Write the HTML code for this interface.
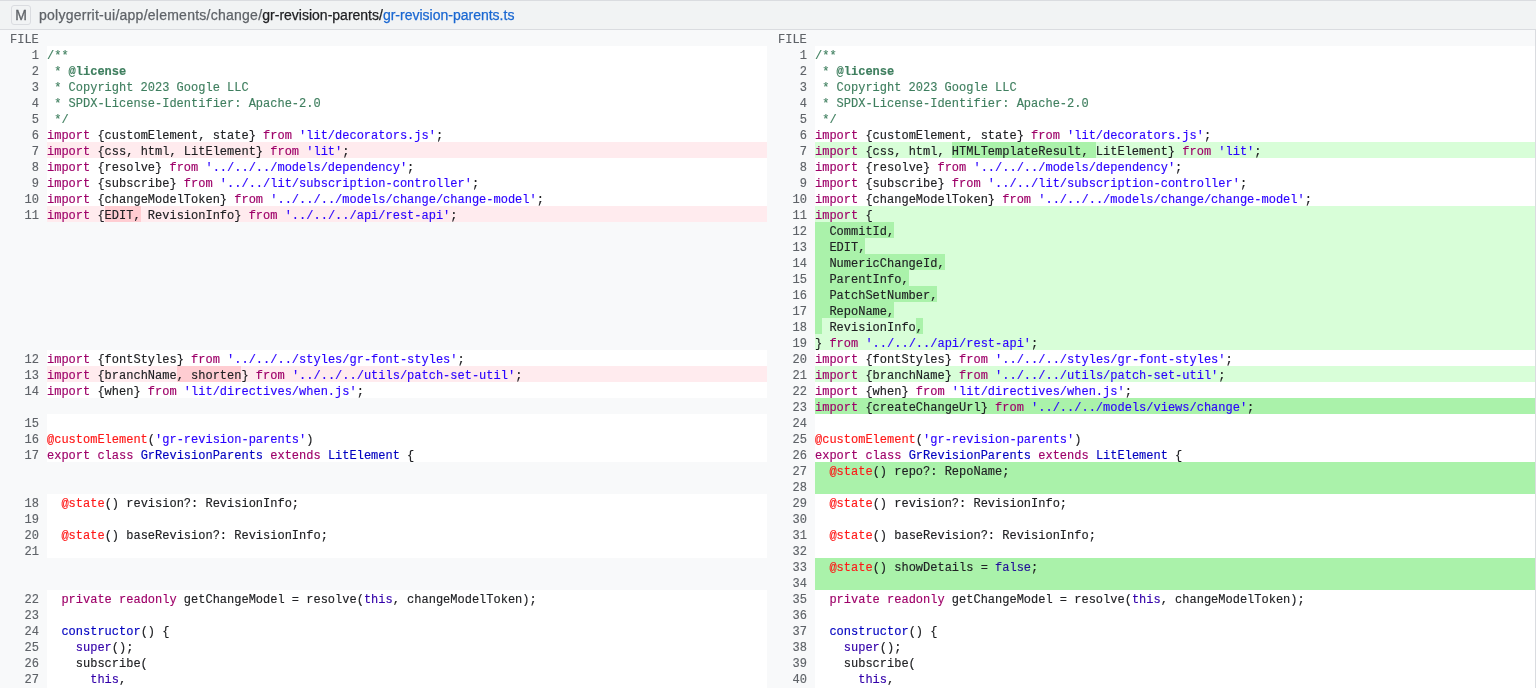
<!DOCTYPE html>
<html><head><meta charset="utf-8">
<style>
html,body{margin:0;padding:0;}
body{-webkit-font-smoothing:antialiased;width:1536px;height:688px;overflow:hidden;position:relative;background:#fff;}
.wrap{position:absolute;left:0;top:0;width:1536px;height:688px;will-change:transform;}
.hdr{position:absolute;left:0;top:0;width:1536px;height:29px;background:#f1f3f4;border-top:1px solid #dadce0;box-sizing:border-box;}
.hdrb{position:absolute;left:0;top:29px;width:1536px;height:1px;background:#dadce0;}
.badge{-webkit-text-stroke:0.3px currentColor;position:absolute;left:11px;top:5px;width:20px;height:20px;box-sizing:border-box;border:1px solid #dadce0;border-radius:3px;background:#f1f3f4;
 font-family:"Liberation Sans",sans-serif;font-size:14px;color:#5f6368;text-align:center;line-height:18px;}
.path{-webkit-text-stroke:0.25px currentColor;position:absolute;left:39px;top:6px;font-family:"Liberation Sans",sans-serif;font-size:14px;line-height:18px;white-space:pre;color:#5f6368;}
.path .g{letter-spacing:0.25px}
.path .d{color:#202124}
.path .f{color:#1967d2}
.rb{position:absolute;left:1535px;top:30px;width:1px;height:658px;background:#dadce0;z-index:5}
.filerow{position:absolute;left:0;top:30px;width:1536px;height:16px;background:#f8f9fa;}
.filerow span{-webkit-text-stroke:0.15px currentColor;position:absolute;top:0;font-family:"Liberation Mono",monospace;font-size:12px;line-height:21px;color:#5f6368;}
.row{position:absolute;left:0;width:1536px;height:16px;}
.row > div{position:absolute;top:0;height:16px;}
.ln{-webkit-text-stroke:0.15px currentColor;background:#f8f9fa;box-sizing:border-box;padding-right:8px;text-align:right;font-family:"Liberation Mono",monospace;font-size:12px;line-height:21px;color:#5f6368;white-space:pre;}
.bk{background:#f8f9fa;}
.ct{-webkit-text-stroke:0.15px currentColor;background:#fff;font-family:"Liberation Mono",monospace;font-size:12px;line-height:21px;color:#202124;white-space:pre;overflow:hidden;}
.ct.rm{background:#ffebee}
.ct.ad{background:#d8fed8}
.ct.add{background:#aaf2aa}
.ct i{position:absolute;top:0;height:16px;}
.hr{background:#ffcdd2}
.ha{background:#aaf2aa}
.tx{position:relative;}
.c{color:#3f7f5f}
.c b{font-weight:bold}
.k{color:#9e0069}
.s{color:#2a00ff}
.m{color:#ff1717}
.t{color:#0000c0}
.b{color:#30a}
.l{color:#219}
</style></head><body>
<div class="wrap">
<div class="hdr"></div>
<div class="hdrb"></div>
<div class="badge">M</div>
<div class="path"><span class="g">polygerrit-ui/app/elements/change/</span><span class="d">gr-revision-parents/</span><span class="f">gr-revision-parents.ts</span></div>
<div class="filerow"><span style="left:10px">FILE</span><span style="left:778px">FILE</span></div>
<div class="row" style="top:46px"><div class="ln" style="left:0;width:47px">1</div><div class="ct" style="left:47px;width:720px"><span class="tx"><span class="c">/**</span></span></div><div class="ln" style="left:767px;width:48px">1</div><div class="ct" style="left:815px;width:721px"><span class="tx"><span class="c">/**</span></span></div></div>
<div class="row" style="top:62px"><div class="ln" style="left:0;width:47px">2</div><div class="ct" style="left:47px;width:720px"><span class="tx"><span class="c"> * <b>@license</b></span></span></div><div class="ln" style="left:767px;width:48px">2</div><div class="ct" style="left:815px;width:721px"><span class="tx"><span class="c"> * <b>@license</b></span></span></div></div>
<div class="row" style="top:78px"><div class="ln" style="left:0;width:47px">3</div><div class="ct" style="left:47px;width:720px"><span class="tx"><span class="c"> * Copyright 2023 Google LLC</span></span></div><div class="ln" style="left:767px;width:48px">3</div><div class="ct" style="left:815px;width:721px"><span class="tx"><span class="c"> * Copyright 2023 Google LLC</span></span></div></div>
<div class="row" style="top:94px"><div class="ln" style="left:0;width:47px">4</div><div class="ct" style="left:47px;width:720px"><span class="tx"><span class="c"> * SPDX-License-Identifier: Apache-2.0</span></span></div><div class="ln" style="left:767px;width:48px">4</div><div class="ct" style="left:815px;width:721px"><span class="tx"><span class="c"> * SPDX-License-Identifier: Apache-2.0</span></span></div></div>
<div class="row" style="top:110px"><div class="ln" style="left:0;width:47px">5</div><div class="ct" style="left:47px;width:720px"><span class="tx"><span class="c"> */</span></span></div><div class="ln" style="left:767px;width:48px">5</div><div class="ct" style="left:815px;width:721px"><span class="tx"><span class="c"> */</span></span></div></div>
<div class="row" style="top:126px"><div class="ln" style="left:0;width:47px">6</div><div class="ct" style="left:47px;width:720px"><span class="tx"><span class="k">import</span> {customElement, state} <span class="k">from</span> <span class="s">&#x27;lit/decorators.js&#x27;</span>;</span></div><div class="ln" style="left:767px;width:48px">6</div><div class="ct" style="left:815px;width:721px"><span class="tx"><span class="k">import</span> {customElement, state} <span class="k">from</span> <span class="s">&#x27;lit/decorators.js&#x27;</span>;</span></div></div>
<div class="row" style="top:142px"><div class="ln" style="left:0;width:47px">7</div><div class="ct rm" style="left:47px;width:720px"><span class="tx"><span class="k">import</span> {css, html, LitElement} <span class="k">from</span> <span class="s">&#x27;lit&#x27;</span>;</span></div><div class="ln" style="left:767px;width:48px">7</div><div class="ct ad" style="left:815px;width:721px"><i class="ha" style="left:136.80px;width:144.00px"></i><span class="tx"><span class="k">import</span> {css, html, HTMLTemplateResult, LitElement} <span class="k">from</span> <span class="s">&#x27;lit&#x27;</span>;</span></div></div>
<div class="row" style="top:158px"><div class="ln" style="left:0;width:47px">8</div><div class="ct" style="left:47px;width:720px"><span class="tx"><span class="k">import</span> {resolve} <span class="k">from</span> <span class="s">&#x27;../../../models/dependency&#x27;</span>;</span></div><div class="ln" style="left:767px;width:48px">8</div><div class="ct" style="left:815px;width:721px"><span class="tx"><span class="k">import</span> {resolve} <span class="k">from</span> <span class="s">&#x27;../../../models/dependency&#x27;</span>;</span></div></div>
<div class="row" style="top:174px"><div class="ln" style="left:0;width:47px">9</div><div class="ct" style="left:47px;width:720px"><span class="tx"><span class="k">import</span> {subscribe} <span class="k">from</span> <span class="s">&#x27;../../lit/subscription-controller&#x27;</span>;</span></div><div class="ln" style="left:767px;width:48px">9</div><div class="ct" style="left:815px;width:721px"><span class="tx"><span class="k">import</span> {subscribe} <span class="k">from</span> <span class="s">&#x27;../../lit/subscription-controller&#x27;</span>;</span></div></div>
<div class="row" style="top:190px"><div class="ln" style="left:0;width:47px">10</div><div class="ct" style="left:47px;width:720px"><span class="tx"><span class="k">import</span> {changeModelToken} <span class="k">from</span> <span class="s">&#x27;../../../models/change/change-model&#x27;</span>;</span></div><div class="ln" style="left:767px;width:48px">10</div><div class="ct" style="left:815px;width:721px"><span class="tx"><span class="k">import</span> {changeModelToken} <span class="k">from</span> <span class="s">&#x27;../../../models/change/change-model&#x27;</span>;</span></div></div>
<div class="row" style="top:206px"><div class="ln" style="left:0;width:47px">11</div><div class="ct rm" style="left:47px;width:720px"><i class="hr" style="left:57.60px;width:36.00px"></i><span class="tx"><span class="k">import</span> {EDIT, RevisionInfo} <span class="k">from</span> <span class="s">&#x27;../../../api/rest-api&#x27;</span>;</span></div><div class="ln" style="left:767px;width:48px">11</div><div class="ct ad" style="left:815px;width:721px"><span class="tx"><span class="k">import</span> {</span></div></div>
<div class="row" style="top:222px"><div class="bk" style="left:0;width:767px"></div><div class="ln" style="left:767px;width:48px">12</div><div class="ct ad" style="left:815px;width:721px"><i class="ha" style="left:0.00px;width:79.20px"></i><span class="tx">  CommitId,</span></div></div>
<div class="row" style="top:238px"><div class="bk" style="left:0;width:767px"></div><div class="ln" style="left:767px;width:48px">13</div><div class="ct ad" style="left:815px;width:721px"><i class="ha" style="left:0.00px;width:50.40px"></i><span class="tx">  EDIT,</span></div></div>
<div class="row" style="top:254px"><div class="bk" style="left:0;width:767px"></div><div class="ln" style="left:767px;width:48px">14</div><div class="ct ad" style="left:815px;width:721px"><i class="ha" style="left:0.00px;width:129.60px"></i><span class="tx">  NumericChangeId,</span></div></div>
<div class="row" style="top:270px"><div class="bk" style="left:0;width:767px"></div><div class="ln" style="left:767px;width:48px">15</div><div class="ct ad" style="left:815px;width:721px"><i class="ha" style="left:0.00px;width:93.60px"></i><span class="tx">  ParentInfo,</span></div></div>
<div class="row" style="top:286px"><div class="bk" style="left:0;width:767px"></div><div class="ln" style="left:767px;width:48px">16</div><div class="ct ad" style="left:815px;width:721px"><i class="ha" style="left:0.00px;width:122.40px"></i><span class="tx">  PatchSetNumber,</span></div></div>
<div class="row" style="top:302px"><div class="bk" style="left:0;width:767px"></div><div class="ln" style="left:767px;width:48px">17</div><div class="ct ad" style="left:815px;width:721px"><i class="ha" style="left:0.00px;width:79.20px"></i><span class="tx">  RepoName,</span></div></div>
<div class="row" style="top:318px"><div class="bk" style="left:0;width:767px"></div><div class="ln" style="left:767px;width:48px">18</div><div class="ct ad" style="left:815px;width:721px"><i class="ha" style="left:0.00px;width:7.20px"></i><i class="ha" style="left:100.80px;width:7.20px"></i><span class="tx">  RevisionInfo,</span></div></div>
<div class="row" style="top:334px"><div class="bk" style="left:0;width:767px"></div><div class="ln" style="left:767px;width:48px">19</div><div class="ct ad" style="left:815px;width:721px"><span class="tx">} <span class="k">from</span> <span class="s">&#x27;../../../api/rest-api&#x27;</span>;</span></div></div>
<div class="row" style="top:350px"><div class="ln" style="left:0;width:47px">12</div><div class="ct" style="left:47px;width:720px"><span class="tx"><span class="k">import</span> {fontStyles} <span class="k">from</span> <span class="s">&#x27;../../../styles/gr-font-styles&#x27;</span>;</span></div><div class="ln" style="left:767px;width:48px">20</div><div class="ct" style="left:815px;width:721px"><span class="tx"><span class="k">import</span> {fontStyles} <span class="k">from</span> <span class="s">&#x27;../../../styles/gr-font-styles&#x27;</span>;</span></div></div>
<div class="row" style="top:366px"><div class="ln" style="left:0;width:47px">13</div><div class="ct rm" style="left:47px;width:720px"><i class="hr" style="left:129.60px;width:64.80px"></i><span class="tx"><span class="k">import</span> {branchName, shorten} <span class="k">from</span> <span class="s">&#x27;../../../utils/patch-set-util&#x27;</span>;</span></div><div class="ln" style="left:767px;width:48px">21</div><div class="ct ad" style="left:815px;width:721px"><span class="tx"><span class="k">import</span> {branchName} <span class="k">from</span> <span class="s">&#x27;../../../utils/patch-set-util&#x27;</span>;</span></div></div>
<div class="row" style="top:382px"><div class="ln" style="left:0;width:47px">14</div><div class="ct" style="left:47px;width:720px"><span class="tx"><span class="k">import</span> {when} <span class="k">from</span> <span class="s">&#x27;lit/directives/when.js&#x27;</span>;</span></div><div class="ln" style="left:767px;width:48px">22</div><div class="ct" style="left:815px;width:721px"><span class="tx"><span class="k">import</span> {when} <span class="k">from</span> <span class="s">&#x27;lit/directives/when.js&#x27;</span>;</span></div></div>
<div class="row" style="top:398px"><div class="bk" style="left:0;width:767px"></div><div class="ln" style="left:767px;width:48px">23</div><div class="ct add" style="left:815px;width:721px"><span class="tx"><span class="k">import</span> {createChangeUrl} <span class="k">from</span> <span class="s">&#x27;../../../models/views/change&#x27;</span>;</span></div></div>
<div class="row" style="top:414px"><div class="ln" style="left:0;width:47px">15</div><div class="ct" style="left:47px;width:720px"><span class="tx"></span></div><div class="ln" style="left:767px;width:48px">24</div><div class="ct" style="left:815px;width:721px"><span class="tx"></span></div></div>
<div class="row" style="top:430px"><div class="ln" style="left:0;width:47px">16</div><div class="ct" style="left:47px;width:720px"><span class="tx"><span class="m">@customElement</span>(<span class="s">&#x27;gr-revision-parents&#x27;</span>)</span></div><div class="ln" style="left:767px;width:48px">25</div><div class="ct" style="left:815px;width:721px"><span class="tx"><span class="m">@customElement</span>(<span class="s">&#x27;gr-revision-parents&#x27;</span>)</span></div></div>
<div class="row" style="top:446px"><div class="ln" style="left:0;width:47px">17</div><div class="ct" style="left:47px;width:720px"><span class="tx"><span class="k">export</span> <span class="k">class</span> <span class="t">GrRevisionParents</span> <span class="k">extends</span> <span class="t">LitElement</span> {</span></div><div class="ln" style="left:767px;width:48px">26</div><div class="ct" style="left:815px;width:721px"><span class="tx"><span class="k">export</span> <span class="k">class</span> <span class="t">GrRevisionParents</span> <span class="k">extends</span> <span class="t">LitElement</span> {</span></div></div>
<div class="row" style="top:462px"><div class="bk" style="left:0;width:767px"></div><div class="ln" style="left:767px;width:48px">27</div><div class="ct add" style="left:815px;width:721px"><span class="tx">  <span class="m">@state</span>() repo?: RepoName;</span></div></div>
<div class="row" style="top:478px"><div class="bk" style="left:0;width:767px"></div><div class="ln" style="left:767px;width:48px">28</div><div class="ct add" style="left:815px;width:721px"><span class="tx"></span></div></div>
<div class="row" style="top:494px"><div class="ln" style="left:0;width:47px">18</div><div class="ct" style="left:47px;width:720px"><span class="tx">  <span class="m">@state</span>() revision?: RevisionInfo;</span></div><div class="ln" style="left:767px;width:48px">29</div><div class="ct" style="left:815px;width:721px"><span class="tx">  <span class="m">@state</span>() revision?: RevisionInfo;</span></div></div>
<div class="row" style="top:510px"><div class="ln" style="left:0;width:47px">19</div><div class="ct" style="left:47px;width:720px"><span class="tx"></span></div><div class="ln" style="left:767px;width:48px">30</div><div class="ct" style="left:815px;width:721px"><span class="tx"></span></div></div>
<div class="row" style="top:526px"><div class="ln" style="left:0;width:47px">20</div><div class="ct" style="left:47px;width:720px"><span class="tx">  <span class="m">@state</span>() baseRevision?: RevisionInfo;</span></div><div class="ln" style="left:767px;width:48px">31</div><div class="ct" style="left:815px;width:721px"><span class="tx">  <span class="m">@state</span>() baseRevision?: RevisionInfo;</span></div></div>
<div class="row" style="top:542px"><div class="ln" style="left:0;width:47px">21</div><div class="ct" style="left:47px;width:720px"><span class="tx"></span></div><div class="ln" style="left:767px;width:48px">32</div><div class="ct" style="left:815px;width:721px"><span class="tx"></span></div></div>
<div class="row" style="top:558px"><div class="bk" style="left:0;width:767px"></div><div class="ln" style="left:767px;width:48px">33</div><div class="ct add" style="left:815px;width:721px"><span class="tx">  <span class="m">@state</span>() showDetails = <span class="l">false</span>;</span></div></div>
<div class="row" style="top:574px"><div class="bk" style="left:0;width:767px"></div><div class="ln" style="left:767px;width:48px">34</div><div class="ct add" style="left:815px;width:721px"><span class="tx"></span></div></div>
<div class="row" style="top:590px"><div class="ln" style="left:0;width:47px">22</div><div class="ct" style="left:47px;width:720px"><span class="tx">  <span class="k">private</span> <span class="k">readonly</span> getChangeModel = resolve(<span class="b">this</span>, changeModelToken);</span></div><div class="ln" style="left:767px;width:48px">35</div><div class="ct" style="left:815px;width:721px"><span class="tx">  <span class="k">private</span> <span class="k">readonly</span> getChangeModel = resolve(<span class="b">this</span>, changeModelToken);</span></div></div>
<div class="row" style="top:606px"><div class="ln" style="left:0;width:47px">23</div><div class="ct" style="left:47px;width:720px"><span class="tx"></span></div><div class="ln" style="left:767px;width:48px">36</div><div class="ct" style="left:815px;width:721px"><span class="tx"></span></div></div>
<div class="row" style="top:622px"><div class="ln" style="left:0;width:47px">24</div><div class="ct" style="left:47px;width:720px"><span class="tx">  <span class="t">constructor</span>() {</span></div><div class="ln" style="left:767px;width:48px">37</div><div class="ct" style="left:815px;width:721px"><span class="tx">  <span class="t">constructor</span>() {</span></div></div>
<div class="row" style="top:638px"><div class="ln" style="left:0;width:47px">25</div><div class="ct" style="left:47px;width:720px"><span class="tx">    <span class="b">super</span>();</span></div><div class="ln" style="left:767px;width:48px">38</div><div class="ct" style="left:815px;width:721px"><span class="tx">    <span class="b">super</span>();</span></div></div>
<div class="row" style="top:654px"><div class="ln" style="left:0;width:47px">26</div><div class="ct" style="left:47px;width:720px"><span class="tx">    subscribe(</span></div><div class="ln" style="left:767px;width:48px">39</div><div class="ct" style="left:815px;width:721px"><span class="tx">    subscribe(</span></div></div>
<div class="row" style="top:670px"><div class="ln" style="left:0;width:47px">27</div><div class="ct" style="left:47px;width:720px"><span class="tx">      <span class="b">this</span>,</span></div><div class="ln" style="left:767px;width:48px">40</div><div class="ct" style="left:815px;width:721px"><span class="tx">      <span class="b">this</span>,</span></div></div>
<div class="row" style="top:686px"><div class="ln" style="left:0;width:47px">28</div><div class="ct" style="left:47px;width:720px"><span class="tx">      () =&gt; <span class="b">this</span>.getChangeModel().repo$,</span></div><div class="ln" style="left:767px;width:48px">41</div><div class="ct" style="left:815px;width:721px"><span class="tx">      () =&gt; <span class="b">this</span>.getChangeModel().repo$,</span></div></div>
<div class="rb"></div>
</div>
</body></html>
